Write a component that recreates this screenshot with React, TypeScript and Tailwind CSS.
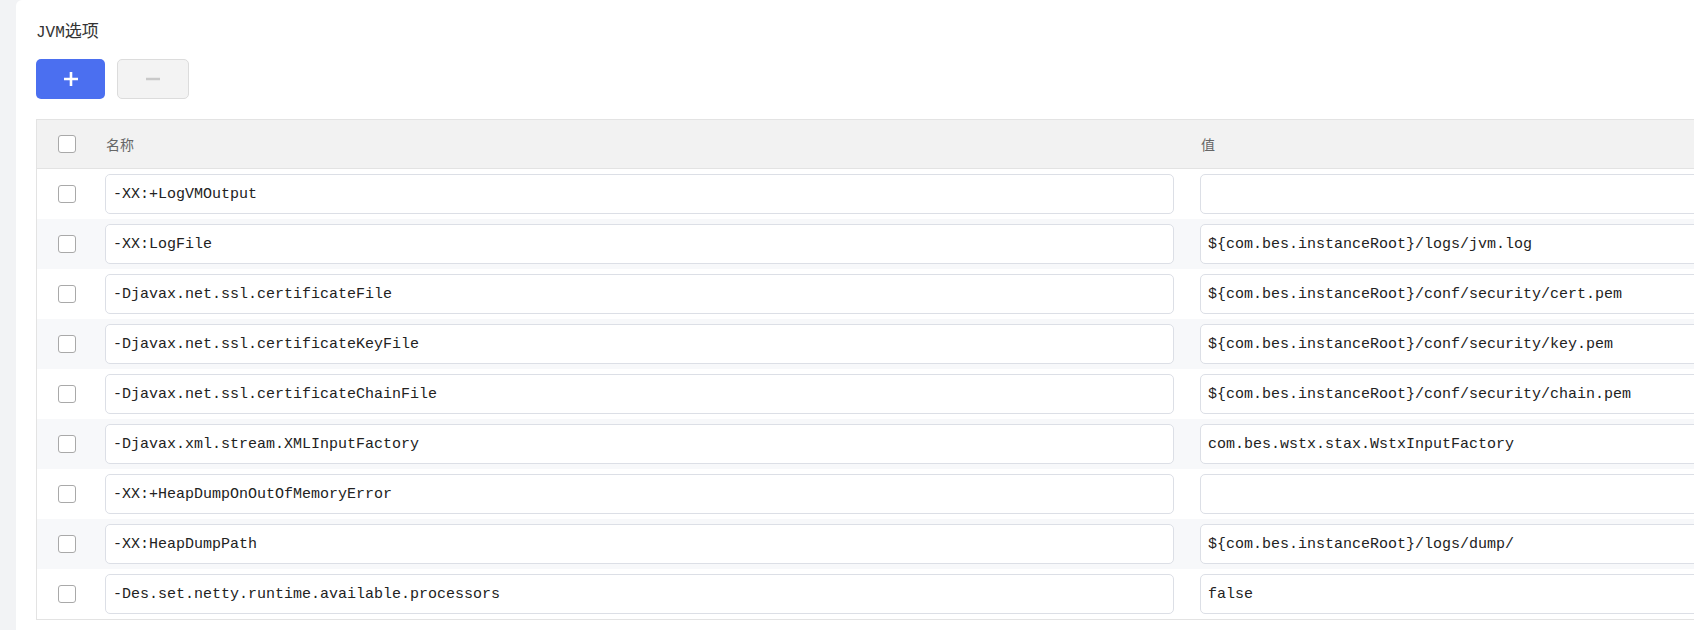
import React from 'react';

const rows: { name: string; value: string }[] = [
  { name: '-XX:+LogVMOutput', value: '' },
  { name: '-XX:LogFile', value: '${com.bes.instanceRoot}/logs/jvm.log' },
  { name: '-Djavax.net.ssl.certificateFile', value: '${com.bes.instanceRoot}/conf/security/cert.pem' },
  { name: '-Djavax.net.ssl.certificateKeyFile', value: '${com.bes.instanceRoot}/conf/security/key.pem' },
  { name: '-Djavax.net.ssl.certificateChainFile', value: '${com.bes.instanceRoot}/conf/security/chain.pem' },
  { name: '-Djavax.xml.stream.XMLInputFactory', value: 'com.bes.wstx.stax.WstxInputFactory' },
  { name: '-XX:+HeapDumpOnOutOfMemoryError', value: '' },
  { name: '-XX:HeapDumpPath', value: '${com.bes.instanceRoot}/logs/dump/' },
  { name: '-Des.set.netty.runtime.available.processors', value: 'false' },
];

const mono = "font-['Liberation_Mono','Noto_Sans_CJK_SC',monospace]";

const Checkbox = () => (
  <span className="block w-[18px] h-[18px] rounded-[3px] border border-[#a9a9a9] bg-white" />
);

const Field = ({ value, className }: { value: string; className: string }) => (
  <input
    readOnly
    value={value}
    className={`h-[40px] rounded-[5px] border border-[#dcdfe6] bg-white px-[7px] text-[15px] text-[#222] outline-none ${mono} ${className}`}
  />
);

export default function App() {
  return (
    <div className="flex h-[630px] w-[1694px] overflow-hidden bg-[#f2f3f5] pl-4">
      <div className="flex-1 min-w-0 overflow-hidden rounded-tl-md bg-white pl-5 pt-[18px]">
        <div className={`h-[24px] leading-[24px] text-[16px] text-[#333] ${mono}`}>
          JVM<span className="text-[17px] font-['Noto_Sans_CJK_SC',sans-serif]">选项</span>
        </div>

        <div className="mt-[17px] flex gap-3">
          <button className="flex h-[40px] w-[69px] items-center justify-center rounded-[5px] bg-[#4b6ff0]">
            <svg width="16" height="16" viewBox="0 0 16 16">
              <path d="M8 1v14M1 8h14" stroke="#fff" strokeWidth="2.6" />
            </svg>
          </button>
          <button className="flex h-[40px] w-[72px] items-center justify-center rounded-[5px] border border-[#dcdcdc] bg-[#f3f3f3]">
            <svg width="16" height="16" viewBox="0 0 16 16">
              <path d="M1 8h14" stroke="#c9c9c9" strokeWidth="2.6" />
            </svg>
          </button>
        </div>

        <div className="mt-[20px] w-[1800px] border border-[#e3e3e3] border-r-0">
          <div className="flex h-[49px] items-center border-b border-[#e3e3e3] bg-[#f2f2f2] text-[14px] text-[#666] font-['Noto_Sans_CJK_SC',sans-serif]">
            <div className="flex w-[60px] shrink-0 justify-center">
              <Checkbox />
            </div>
            <div className="w-[1090px] shrink-0 pl-[9px]">名称</div>
            <div className="pl-[14px]">值</div>
          </div>
          {rows.map((r, i) => (
            <div key={r.name} className={`flex h-[50px] items-center ${i % 2 === 1 ? 'bg-[#f7f8fa]' : 'bg-white'}`}>
              <div className="flex w-[60px] shrink-0 justify-center">
                <Checkbox />
              </div>
              <div className="w-[1090px] shrink-0 pl-2 pr-[13px]">
                <Field value={r.name} className="w-full" />
              </div>
              <div className="shrink-0 pl-[13px]">
                <Field value={r.value} className="w-[560px]" />
              </div>
            </div>
          ))}
        </div>
      </div>
    </div>
  );
}
